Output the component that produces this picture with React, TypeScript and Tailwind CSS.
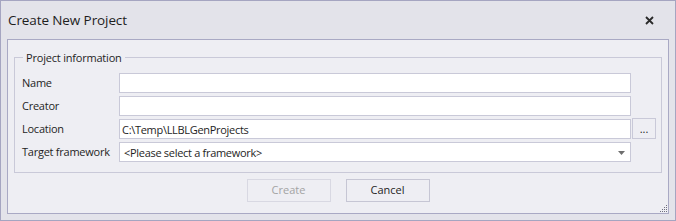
import React from 'react';

const font = { fontFamily: '"Segoe UI", "Open Sans", "Noto Sans", sans-serif' };

const Field: React.FC<{ label: string; value?: string; browse?: boolean; select?: boolean }> = ({
  label,
  value,
  browse,
  select,
}) => (
  <div className="flex h-[20px] items-start">
    <span className="w-[97px] text-[11px] leading-[20px] tracking-[-0.25px] text-[#1e1e1e]">{label}</span>
    <div className="relative flex h-[20px] w-[512px] items-center border border-[#c9c9d8] bg-white">
      {value && (
        <span
          className={`${select ? 'pl-[4px]' : 'pl-[2px]'} text-[11px] leading-none tracking-[-0.3px] text-[#1e1e1e]`}
        >
          {value}
        </span>
      )}
      {select && (
        <svg className="absolute right-[5px] top-[8px]" width="7" height="4" viewBox="0 0 7 4">
          <path d="M0 0H7L3.5 4Z" fill="#6e6e6e" />
        </svg>
      )}
    </div>
    {browse && (
      <button className="-mt-[1px] ml-[1px] flex h-[21px] w-[24px] items-center justify-center border border-[#c9c9d8] bg-[#eeeef3] pb-[1px] text-[11px] leading-none text-[#1e1e1e]">
        ...
      </button>
    )}
  </div>
);

export default function App() {
  return (
    <div
      style={font}
      className="flex h-[221px] w-[676px] flex-col border border-[#a5a5c1] bg-[#e3e3ea]"
    >
      <div className="flex h-[38px] items-center justify-between pl-[7px] pr-[21px]">
        <span className="text-[13.5px] tracking-[-0.1px] text-[#1e1e1e]">Create New Project</span>
        <svg width="9" height="9" viewBox="0 0 9 9">
          <path d="M1 1L8 8M8 1L1 8" stroke="#2a2a2a" strokeWidth="1.8" />
        </svg>
      </div>
      <div className="relative mx-[6px] mb-[6px] flex flex-1 flex-col border border-[#a9a9c4] bg-[#eeeef3] px-[6px]">
        <fieldset className="mt-[10px] flex flex-col gap-[3px] border border-[#c9c9d8] pb-[10px] pl-[7px] pr-[5px]">
          <legend className="ml-[1px] px-[3px] text-[11px] leading-[15px] tracking-[-0.2px] text-[#1e1e1e]">
            Project information
          </legend>
          <div className="h-[5px]" />
          <Field label="Name" />
          <Field label="Creator" />
          <Field label="Location" value="C:\Temp\LLBLGenProjects" browse />
          <Field label="Target framework" value="<Please select a framework>" select />
        </fieldset>
        <div className="mt-[6px] flex justify-center gap-[15px]">
          <button className="h-[23px] w-[84px] border border-[#d8d8e2] text-[11px] text-[#a3a3a3]">Create</button>
          <button className="h-[23px] w-[84px] border border-[#c6c6d4] text-[11px] text-[#1e1e1e]">Cancel</button>
        </div>
        <svg className="absolute bottom-[1px] right-[1px]" width="7" height="7" viewBox="0 0 7 7">
          {[
            [6, 0],
            [4, 2],
            [6, 2],
            [2, 4],
            [4, 4],
            [6, 4],
            [0, 6],
            [2, 6],
            [4, 6],
            [6, 6],
          ].map(([x, y]) => (
            <rect key={`${x}-${y}`} x={x} y={y} width="1" height="1" fill="#6f6f80" />
          ))}
        </svg>
      </div>
    </div>
  );
}
